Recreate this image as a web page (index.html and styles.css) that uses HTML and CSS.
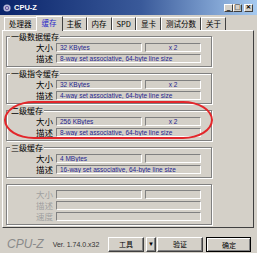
FILE: index.html
```html
<!DOCTYPE html>
<html lang="zh">
<head>
  <meta charset="UTF-8">
  <title>CPU-Z</title>
  <link rel="stylesheet" href="styles.css">
</head>
<body>

<div class="titlebar">
  <svg class="app-icon" width="8" height="8" viewBox="0 0 8 8">
    <circle cx="4" cy="4" r="3.6" fill="#b8b8d8"/>
    <circle cx="4" cy="4" r="2" fill="#5a4a9a"/>
    <circle cx="4" cy="4" r="0.9" fill="#e0e0f0"/>
  </svg>
  <span class="title">CPU-Z</span>
  <div class="caption-buttons">
    <span class="cap-btn">_</span>
    <span class="cap-btn">□</span>
    <span class="cap-btn close">×</span>
  </div>
</div>

<div class="tabs">
  <span class="tab">处理器</span>
  <span class="tab active">缓存</span>
  <span class="tab">主板</span>
  <span class="tab">内存</span>
  <span class="tab">SPD</span>
  <span class="tab">显卡</span>
  <span class="tab">测试分数</span>
  <span class="tab">关于</span>
</div>

<div class="panel">
  <fieldset class="group">
    <legend>一级数据缓存</legend>
    <div class="row"><span class="label">大小</span><span class="field size">32 KBytes</span><span class="field count">x 2</span></div>
    <div class="row"><span class="label">描述</span><span class="field wide">8-way set associative, 64-byte line size</span></div>
  </fieldset>

  <fieldset class="group">
    <legend>一级指令缓存</legend>
    <div class="row"><span class="label">大小</span><span class="field size">32 KBytes</span><span class="field count">x 2</span></div>
    <div class="row"><span class="label">描述</span><span class="field wide">4-way set associative, 64-byte line size</span></div>
  </fieldset>

  <fieldset class="group">
    <legend>二级缓存</legend>
    <div class="row"><span class="label">大小</span><span class="field size">256 KBytes</span><span class="field count">x 2</span></div>
    <div class="row"><span class="label">描述</span><span class="field wide">8-way set associative, 64-byte line size</span></div>
  </fieldset>

  <fieldset class="group">
    <legend>三级缓存</legend>
    <div class="row"><span class="label">大小</span><span class="field size">4 MBytes</span><span class="field count"></span></div>
    <div class="row"><span class="label">描述</span><span class="field wide">16-way set associative, 64-byte line size</span></div>
  </fieldset>

  <fieldset class="group empty">
    <div class="row"><span class="label">大小</span><span class="field size"></span><span class="field count"></span></div>
    <div class="row"><span class="label">描述</span><span class="field wide"></span></div>
    <div class="row"><span class="label">速度</span><span class="field wide"></span></div>
  </fieldset>

  <div class="highlight"></div>
</div>

<div class="footer">
  <span class="logo">CPU-Z</span>
  <span class="version">Ver. 1.74.0.x32</span>
  <div class="buttons">
    <span class="btn tools">工具</span>
    <span class="btn drop">▾</span>
    <span class="btn validate">验证</span>
    <span class="btn ok">确定</span>
  </div>
</div>

</body>
</html>
```

FILE: styles.css
```css
body {
  margin: 0;
  width: 257px;
  height: 253px;
  overflow: hidden;
  background: #d4d0c8;
  font-family: "Noto Sans CJK SC", sans-serif;
  color: #000;
}

/* title bar */
.titlebar {
  height: 15px;
  display: flex;
  align-items: center;
  padding: 0 4px 0 3px;
  background: linear-gradient(to right, #0a246a 0%, #3a5a9a 55%, #a6caf0 100%);
  color: #fff;
}
.app-icon {
  margin-right: 3px;
}
.title {
  font-family: "Liberation Sans", sans-serif;
  font-weight: bold;
  font-size: 7.5px;
}
.caption-buttons {
  margin-left: auto;
  display: flex;
}
.cap-btn {
  width: 9px;
  height: 8px;
  box-sizing: border-box;
  border: 1px solid;
  border-color: #fff #404040 #404040 #fff;
  background: #d4d0c8;
  color: #000;
  font-family: "DejaVu Sans", sans-serif;
  font-size: 7px;
  line-height: 5px;
  text-align: center;
  font-weight: bold;
}
.cap-btn.close {
  margin-left: 2px;
}

/* tabs */
.tabs {
  display: flex;
  align-items: flex-end;
  height: 15px;
  padding: 0 0 0 4px;
}
.tab {
  height: 12px;
  padding: 0 4px;
  border: 1px solid;
  border-color: #fff #404040 transparent #fff;
  border-bottom: none;
  font-size: 7.5px;
  line-height: 12px;
  white-space: nowrap;
}
.tab.active {
  height: 14px;
  margin: 0 -1px -1px;
  padding: 0 5px;
  background: #d4d0c8;
  color: #2a2ac8;
  position: relative;
  z-index: 1;
}

/* main panel */
.panel {
  position: relative;
  height: 198px;
  box-sizing: border-box;
  margin: 0 3px 0 2px;
  padding: 1px 3px;
  border: 1px solid;
  border-color: #fff #404040 #404040 #fff;
}
.group {
  width: 206px;
  box-sizing: border-box;
  margin: 0 0 2px;
  padding: 2px 0 3px;
  border: 1px solid #808080;
  box-shadow: inset 1px 1px #fff, 1px 1px #fff;
  min-inline-size: 0;
}
.group legend {
  margin-left: 3px;
  padding: 0 1px;
  font-size: 8px;
  line-height: 9px;
  background: #d4d0c8;
}
.group.empty {
  margin-top: 6px;
  padding-top: 5px;
  padding-bottom: 3px;
}
.row {
  display: flex;
  gap: 3px;
}
.row + .row {
  margin-top: 2px;
}
.label {
  width: 46px;
  text-align: right;
  font-size: 8.5px;
  line-height: 9px;
}
.empty .label {
  color: #a0a0a0;
}
.field {
  height: 9px;
  box-sizing: border-box;
  border: 1px solid;
  border-color: #808080 #fff #fff #808080;
  padding-left: 3px;
  font-family: "Liberation Sans", sans-serif;
  font-size: 6.5px;
  line-height: 7px;
  color: #1f1f8f;
  white-space: nowrap;
  overflow: hidden;
}
.size {
  width: 86px;
}
.count {
  width: 56px;
  padding-left: 0;
  text-align: center;
}
.wide {
  width: 145px;
}
.highlight {
  position: absolute;
  left: 1px;
  top: 70px;
  width: 209px;
  height: 38px;
  box-sizing: border-box;
  border: 2.5px solid #e3262a;
  border-radius: 30px / 19px;
}

/* footer */
.footer {
  display: flex;
  align-items: flex-end;
  height: 25px;
  box-sizing: border-box;
  padding: 0 6px 1px 7px;
}
.logo {
  font-family: "Liberation Sans", sans-serif;
  font-style: italic;
  font-size: 12px;
  line-height: 15px;
  color: #8a8a8a;
}
.version {
  margin-left: 9px;
  font-family: "Liberation Sans", sans-serif;
  font-size: 7px;
  line-height: 15px;
  color: #333;
}
.buttons {
  margin-left: auto;
  display: flex;
}
.btn {
  height: 15px;
  box-sizing: border-box;
  border: 1px solid;
  border-color: #fff #404040 #404040 #fff;
  box-shadow: inset -1px -1px #808080;
  font-size: 7px;
  line-height: 13px;
  text-align: center;
}
.tools {
  width: 36px;
}
.drop {
  width: 10px;
  margin-left: 2px;
  font-family: "DejaVu Sans", sans-serif;
  font-size: 7px;
}
.validate {
  width: 46px;
  margin-left: 1px;
}
.ok {
  width: 45px;
  margin-left: 3px;
  outline: 1px solid #000;
  outline-offset: -1px;
  border-width: 2px 1px 1px 2px;
}
```
